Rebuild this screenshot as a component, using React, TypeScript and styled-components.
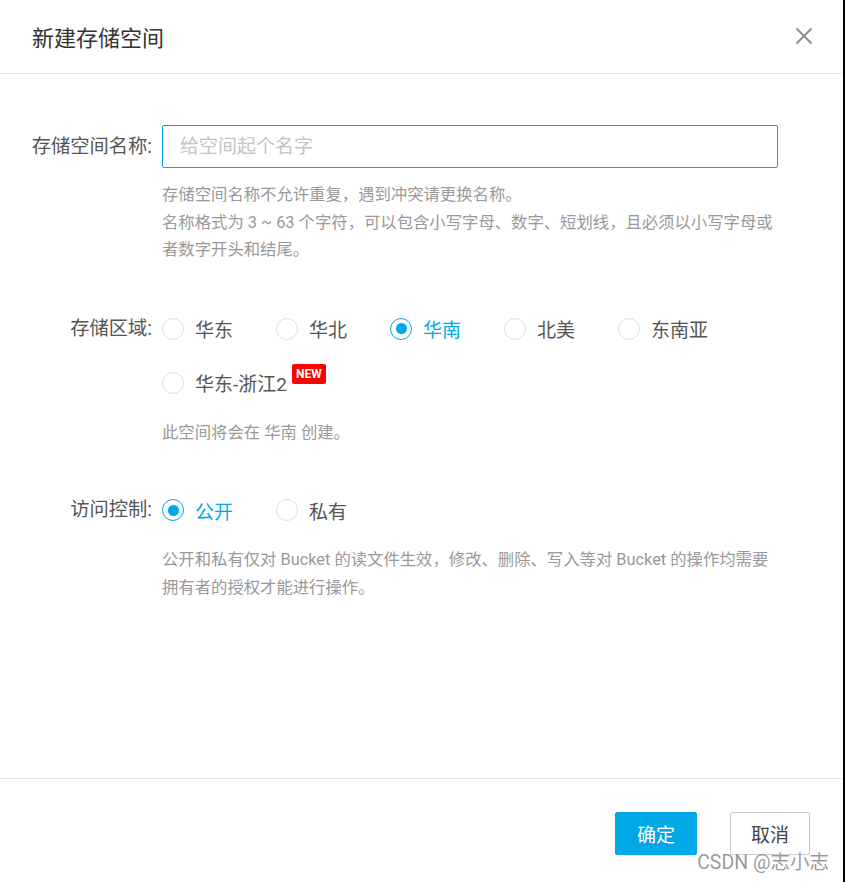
import React, { useState } from "react";
import styled, { createGlobalStyle } from "styled-components";

const Global = createGlobalStyle`
  html, body { margin: 0; padding: 0; background: #000; }
  body { font-family: Roboto, "Noto Sans CJK SC", "Noto Sans", sans-serif; }
  * { box-sizing: border-box; }
`;

const Dialog = styled.div`
  position: relative;
  width: 843px;
  height: 882px;
  background: #fff;
  display: flex;
  flex-direction: column;
`;

const Header = styled.header`
  height: 74px;
  flex: none;
  display: flex;
  align-items: center;
  justify-content: space-between;
  padding: 0 30px 2px 32px;
  border-bottom: 1px solid #e6e6e6;
`;

const Title = styled.h1`
  margin: 0;
  font-size: 22px;
  font-weight: 400;
  color: #333;
`;

const CloseButton = styled.button`
  width: 18px;
  height: 18px;
  padding: 0;
  border: 0;
  background: none;
  display: flex;
`;

const Body = styled.main`
  flex: 1;
  padding-top: 51px;
`;

const Field = styled.section<{ $gap: number }>`
  display: flex;
  margin-bottom: ${(p) => p.$gap}px;
`;

const Label = styled.label<{ $lh: number }>`
  width: 152px;
  flex: none;
  margin-right: 10px;
  text-align: right;
  font-size: 19.3px;
  line-height: ${(p) => p.$lh}px;
  color: #555;
  white-space: nowrap;
`;

const Control = styled.div`
  width: 616px;
`;

const Input = styled.input`
  display: block;
  width: 616px;
  height: 43px;
  border: 1px solid #00a8e8;
  border-radius: 2px;
  padding: 0 17px;
  font-family: inherit;
  font-size: 19px;
  color: #333;
  outline: none;
  &::placeholder { color: #c4c4c4; }
`;

const Help = styled.p<{ $mt: number }>`
  margin: ${(p) => p.$mt}px 0 0;
  font-size: 16.35px;
  line-height: 27.5px;
  color: #999;
`;

const RadioGroup = styled.div`
  display: flex;
  flex-wrap: wrap;
`;

const Option = styled.label`
  width: 114px;
  height: 54px;
  display: flex;
  align-items: center;
  cursor: pointer;
`;

const Circle = styled.span<{ $on: boolean }>`
  width: 22px;
  height: 22px;
  flex: none;
  border-radius: 50%;
  border: ${(p) => (p.$on ? "1.5px solid #00a8e8" : "1px solid #e0e0e0")};
  display: flex;
  align-items: center;
  justify-content: center;
  &::after {
    content: "";
    display: ${(p) => (p.$on ? "block" : "none")};
    width: 11px;
    height: 11px;
    border-radius: 50%;
    background: #00a8e8;
  }
`;

const OptionText = styled.span<{ $on: boolean }>`
  margin-left: 11px;
  font-size: 19px;
  color: ${(p) => (p.$on ? "#00a8e8" : "#555")};
  white-space: nowrap;
`;

const NewBadge = styled.span`
  position: relative;
  top: -12px;
  display: inline-block;
  margin-left: 5px;
  height: 20px;
  padding: 0 4px;
  background: #ff0000;
  border-radius: 2px;
  color: #fff;
  font-family: Roboto, sans-serif;
  font-size: 12px;
  font-weight: 700;
  line-height: 20px;
  vertical-align: middle;
`;

const Footer = styled.footer`
  height: 104px;
  flex: none;
  border-top: 1px solid #e6e6e6;
  padding: 33px 33px 0 0;
  display: flex;
  justify-content: flex-end;
  gap: 33px;
`;

const Button = styled.button<{ $primary?: boolean }>`
  height: 43px;
  width: ${(p) => (p.$primary ? 82 : 80)}px;
  border-radius: 2px;
  border: 1px solid ${(p) => (p.$primary ? "#00a8e8" : "#c8c8c8")};
  background: ${(p) => (p.$primary ? "#00a8e8" : "#fff")};
  color: ${(p) => (p.$primary ? "#fff" : "#444")};
  font-family: inherit;
  font-size: 19px;
  cursor: pointer;
`;

const Watermark = styled.div`
  position: absolute;
  right: 14px;
  bottom: 8px;
  font-size: 19.5px;
  line-height: 22px;
  color: rgba(120, 120, 120, 0.75);
  text-shadow: 0 0 2px #fff;
  pointer-events: none;
`;

type Opt = { key: string; text: string; isNew?: boolean };

const regions: Opt[] = [
  { key: "z0", text: "华东" },
  { key: "z1", text: "华北" },
  { key: "z2", text: "华南" },
  { key: "na0", text: "北美" },
  { key: "as0", text: "东南亚" },
  { key: "z3", text: "华东-浙江2", isNew: true },
];

const access: Opt[] = [
  { key: "public", text: "公开" },
  { key: "private", text: "私有" },
];

function Radios({ options, value, onChange }: { options: Opt[]; value: string; onChange: (v: string) => void }) {
  return (
    <RadioGroup>
      {options.map((o) => (
        <Option key={o.key} onClick={() => onChange(o.key)}>
          <Circle $on={value === o.key} />
          <OptionText $on={value === o.key}>
            {o.text}
            {o.isNew && <NewBadge>NEW</NewBadge>}
          </OptionText>
        </Option>
      ))}
    </RadioGroup>
  );
}

export default function App() {
  const [region, setRegion] = useState("z2");
  const [acl, setAcl] = useState("public");
  const regionName = regions.find((r) => r.key === region)?.text;
  return (
    <>
      <Global />
      <Dialog>
        <Header>
          <Title>新建存储空间</Title>
          <CloseButton aria-label="关闭">
            <svg width="18" height="18" viewBox="0 0 18 18">
              <path d="M1.5 1.5 L16.5 16.5 M16.5 1.5 L1.5 16.5" stroke="#8a8a8a" strokeWidth="1.8" fill="none" />
            </svg>
          </CloseButton>
        </Header>
        <Body>
          <Field $gap={38}>
            <Label $lh={43}>存储空间名称:</Label>
            <Control>
              <Input placeholder="给空间起个名字" />
              <Help $mt={13}>
                存储空间名称不允许重复，遇到冲突请更换名称。
                <br />
                名称格式为 3 ~ 63 个字符，可以包含小写字母、数字、短划线，且必须以小写字母或者数字开头和结尾。
              </Help>
            </Control>
          </Field>
          <Field $gap={37}>
            <Label $lh={54}>存储区域:</Label>
            <Control>
              <Radios options={regions} value={region} onChange={setRegion} />
              <Help $mt={9}>此空间将会在 {regionName} 创建。</Help>
            </Control>
          </Field>
          <Field $gap={0}>
            <Label $lh={54}>访问控制:</Label>
            <Control>
              <Radios options={access} value={acl} onChange={setAcl} />
              <Help $mt={9}>
                公开和私有仅对 Bucket 的读文件生效，修改、删除、写入等对 Bucket 的操作均需要拥有者的授权才能进行操作。
              </Help>
            </Control>
          </Field>
        </Body>
        <Footer>
          <Button $primary>确定</Button>
          <Button>取消</Button>
        </Footer>
        <Watermark>CSDN @志小志</Watermark>
      </Dialog>
    </>
  );
}
